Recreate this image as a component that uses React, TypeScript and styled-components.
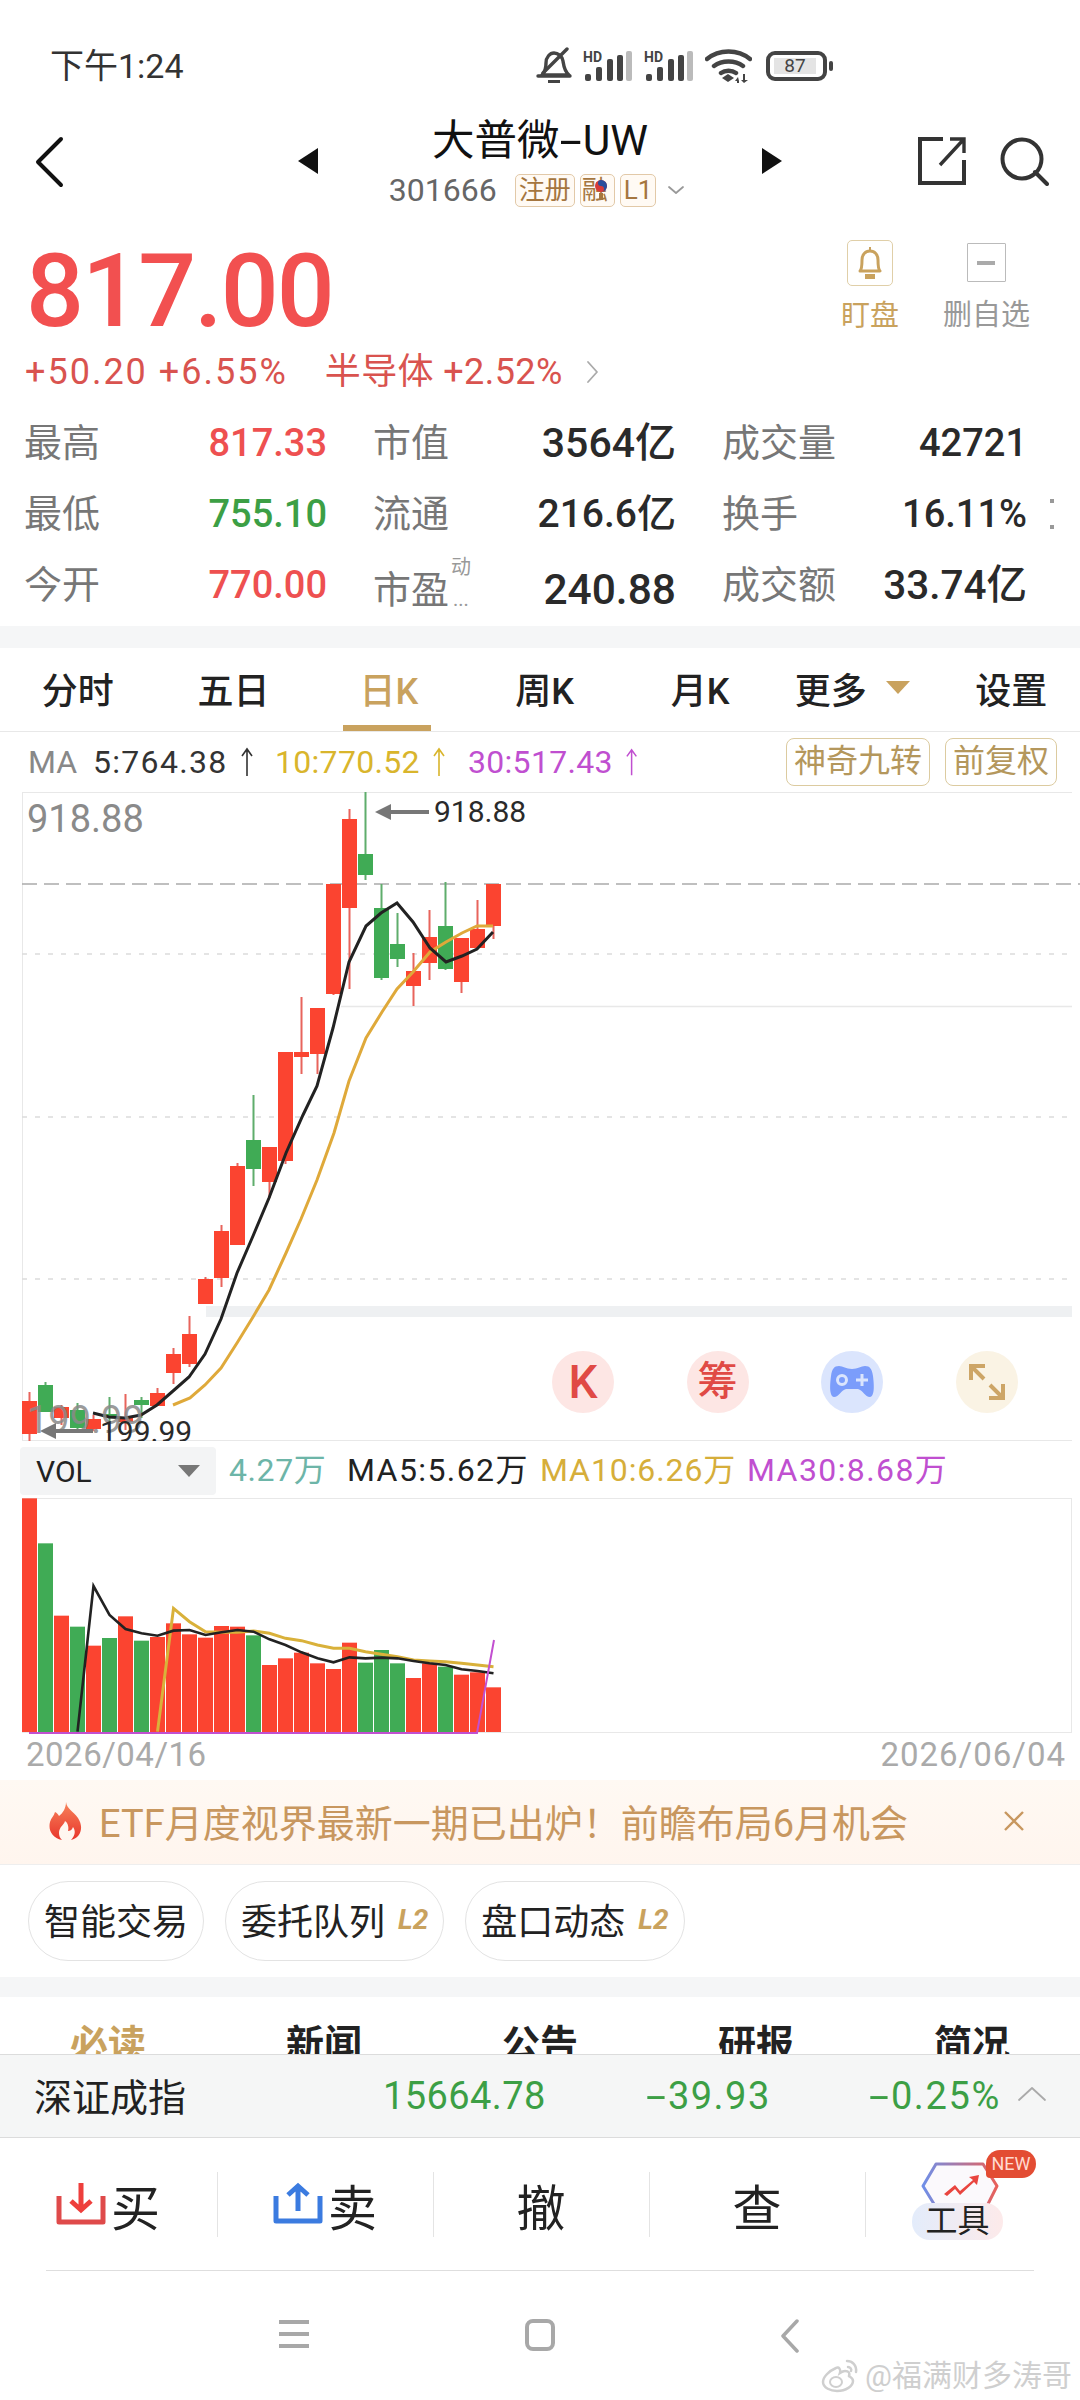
import React from "react";
import styled, { createGlobalStyle } from "styled-components";

const FONT = `Roboto, "Noto Sans CJK SC", "Noto Sans", sans-serif`;
const RED = "#ee5050";
const GREEN = "#3c9f45";
const GOLD = "#c9a25e";

const Global = createGlobalStyle`
  html, body { margin: 0; padding: 0; background: #fff; }
  body { font-family: ${FONT}; }
  * { box-sizing: border-box; }
`;

const Page = styled.div`
  position: relative;
  width: 1080px;
  height: 2400px;
  overflow: hidden;
  background: #fff;
  color: #222;
`;

/* a dash drawn wide, as the app's own font has it */
const Dash = styled.span`
  display: inline-block;
  width: 0.55em;
  text-align: center;
  transform: scaleX(1.9);
`;

/* status bar */
const StatusBar = styled.div`
  height: 110px;
  padding: 45px 253px 0 50px;
  display: flex;
  justify-content: space-between;
  align-items: flex-start;
`;
const Clock = styled.div`
  font-size: 34px;
  line-height: 42px;
  color: #333;
`;
const StatusIcons = styled.div`
  display: flex;
  align-items: center;
  gap: 11px;
  height: 42px;
`;
const Battery = styled.div`
  position: relative;
  margin-left: 3px;
  width: 61px;
  height: 30px;
  border: 4px solid #444;
  border-radius: 9px;
  padding: 3px 7px 3px 4px;
  &::after {
    content: "";
    position: absolute;
    right: -10px;
    top: 6px;
    width: 4px;
    height: 10px;
    border-radius: 2px;
    background: #444;
  }
`;
const BatteryLevel = styled.div`
  height: 16px;
  background: #e4e4e4;
  font-size: 19px;
  line-height: 16px;
  text-align: center;
  color: #444;
`;

/* header */
const Header = styled.div`
  height: 116px;
  display: grid;
  grid-template-columns: 298px 484px 298px;
`;
const HeaderSide = styled.div<{ $end?: boolean }>`
  display: flex;
  align-items: flex-start;
  justify-content: ${(p) => (p.$end ? "flex-end" : "flex-start")};
  gap: 32px;
  padding: 26px ${(p) => (p.$end ? "31px" : "0")} 0 ${(p) => (p.$end ? "0" : "34px")};
`;
const HeaderCenter = styled.div`
  display: flex;
  justify-content: space-between;
  align-items: flex-start;
`;
const Arrow = styled.div`
  margin-top: 38px;
  line-height: 0;
`;
const HeaderTitleCol = styled.div`
  display: flex;
  flex-direction: column;
  align-items: center;
  padding-top: 6px;
`;
const Title = styled.div`
  font-size: 42.5px;
  line-height: 50px;
  color: #111;
`;
const CodeRow = styled.div`
  display: flex;
  align-items: center;
  gap: 5px;
  margin-top: 7px;
  margin-right: 6px;
`;
const Code = styled.div`
  font-size: 32px;
  line-height: 34px;
  color: #666;
  margin-right: 13px;
`;
const Tag = styled.div`
  height: 33px;
  padding: 0 3px;
  border: 1px solid #e2c9a8;
  border-radius: 5px;
  background: #fffaf4;
  color: #a5763f;
  font-size: 26px;
  line-height: 31px;
  white-space: nowrap;
  display: flex;
  align-items: center;
`;
const RongTag = styled(Tag)`
  width: 35px;
  overflow: hidden;
  padding: 0 1px;
`;
const CodeMore = styled.div`
  margin-left: 6px;
  line-height: 0;
`;

/* quote */
const Quote = styled.div`
  height: 181px;
  display: flex;
  justify-content: space-between;
  padding: 0 50px 0 25px;
`;
const QuoteLeft = styled.div`
  display: flex;
  flex-direction: column;
`;
const Price = styled.div`
  font-size: 102px;
  font-weight: 500;
  line-height: 116px;
  margin-top: 7px;
  margin-left: 1px;
  letter-spacing: -1.9px;
  color: #f25050;
`;
const ChangeRow = styled.div`
  display: flex;
  align-items: center;
  gap: 37px;
  font-size: 36px;
  line-height: 42px;
  color: #d9534f;
  margin-top: 2px;
`;
const ChangeValue = styled.span`
  letter-spacing: 2px;
`;
const ChangeSector = styled.span`
  letter-spacing: 0.4px;
  margin-right: -14px;
`;
const QuoteActions = styled.div`
  display: flex;
  gap: 44px;
  padding-top: 14px;
`;
const Action = styled.div<{ $gold?: boolean }>`
  display: flex;
  flex-direction: column;
  align-items: center;
  font-size: 29px;
  line-height: 36px;
  color: ${(p) => (p.$gold ? GOLD : "#999")};
`;
const ActionBox = styled.div<{ $gold?: boolean }>`
  width: ${(p) => (p.$gold ? 46 : 39)}px;
  height: ${(p) => (p.$gold ? 46 : 39)}px;
  margin: ${(p) => (p.$gold ? "0 0 12px" : "3px 0 15px")};
  border: 1px solid ${(p) => (p.$gold ? "#e0cfa8" : "#bbb")};
  border-radius: ${(p) => (p.$gold ? 5 : 1)}px;
  display: flex;
  align-items: center;
  justify-content: center;
`;
const Minus = styled.div`
  width: 18px;
  height: 4px;
  background: #aaa;
`;

/* stats */
const Stats = styled.div`
  position: relative;
  height: 219px;
  padding-left: 24px;
  display: grid;
  grid-template-columns: 303px 303px 305px;
  grid-auto-rows: 71px;
  column-gap: 46px;
`;
const Stat = styled.div<{ $low?: boolean }>`
  display: flex;
  justify-content: space-between;
  align-items: center;
  padding-top: ${(p) => (p.$low ? 10 : 0)}px;
`;
const StatLabel = styled.div`
  position: relative;
  font-size: 38px;
  line-height: 46px;
  color: #777;
`;
const StatSup = styled.span`
  position: absolute;
  left: 78px;
  top: -12px;
  font-size: 20px;
  line-height: 24px;
  color: #999;
`;
const StatDots = styled.span`
  position: absolute;
  left: 80px;
  top: 20px;
  font-size: 20px;
  line-height: 24px;
  color: #999;
`;
const StatValue = styled.div<{ $c?: string; $fs: number }>`
  font-size: ${(p) => p.$fs}px;
  font-weight: 500;
  line-height: 46px;
  color: ${(p) => p.$c || "#2a2a2a"};
`;
const Kebab = styled.div`
  position: absolute;
  left: 1050px;
  top: 92px;
  width: 4px;
  height: 30px;
  border-top: 4px solid #999;
  border-bottom: 4px solid #999;
`;
const Band = styled.div<{ $h: number }>`
  height: ${(p) => p.$h}px;
  background: #f5f6f7;
`;

/* period tabs */
const PeriodTabs = styled.div`
  height: 84px;
  display: grid;
  grid-template-columns: repeat(7, 155.6px);
  border-bottom: 1px solid #e8e8e8;
`;
const PeriodTab = styled.div<{ $on?: boolean }>`
  position: relative;
  display: flex;
  align-items: center;
  justify-content: center;
  gap: 12px;
  padding-bottom: 4px;
  font-size: 36px;
  font-weight: 500;
  color: ${(p) => (p.$on ? GOLD : "#222")};
  &::after {
    content: "";
    display: ${(p) => (p.$on ? "block" : "none")};
    position: absolute;
    left: 32px;
    width: 88px;
    bottom: 0;
    height: 6px;
    background: ${GOLD};
  }
`;
const Caret = styled.div<{ $c: string; $w: number }>`
  width: 0;
  height: 0;
  border-left: ${(p) => p.$w}px solid transparent;
  border-right: ${(p) => p.$w}px solid transparent;
  border-top: ${(p) => p.$w * 1.15}px solid ${(p) => p.$c};
`;
const MoreCaret = styled(Caret)`
  margin: 0 7px;
`;

/* MA legend */
const MaRow = styled.div`
  height: 60px;
  display: flex;
  align-items: center;
  justify-content: space-between;
  padding: 0 23px 0 28px;
`;
const MaList = styled.div`
  display: flex;
  align-items: center;
  font-size: 32px;
`;
const MaItem = styled.span<{ $c: string; $w: number; $ls?: number }>`
  display: inline-flex;
  align-items: center;
  gap: 12px;
  width: ${(p) => p.$w}px;
  letter-spacing: ${(p) => p.$ls || 0}px;
  color: ${(p) => p.$c};
  white-space: nowrap;
`;
const MaButtons = styled.div`
  display: flex;
  gap: 15px;
`;
const MaButton = styled.div`
  height: 48px;
  padding: 0 7px;
  border: 1px solid #dccba0;
  border-radius: 8px;
  color: #b4975c;
  font-size: 32px;
  line-height: 44px;
  white-space: nowrap;
`;

/* chart */
const ChartWrap = styled.div`
  position: relative;
  height: 649px;
  line-height: 0;
`;
const FloatButtons = styled.div`
  position: absolute;
  left: 552px;
  top: 559px;
  display: flex;
  gap: 72.5px;
`;
const FloatButton = styled.div<{ $bg: string; $c: string; $fs?: number }>`
  width: 62px;
  height: 62px;
  border-radius: 50%;
  background: ${(p) => p.$bg};
  color: ${(p) => p.$c};
  display: flex;
  align-items: center;
  justify-content: center;
  font-size: ${(p) => p.$fs || 40}px;
  font-weight: 500;
  line-height: 1;
`;

/* VOL legend */
const VolRow = styled.div`
  height: 57px;
  display: flex;
  align-items: flex-start;
  padding: 5px 0 0 20px;
  font-size: 32px;
  white-space: nowrap;
`;
const VolSelect = styled.div`
  width: 196px;
  height: 48px;
  margin: 1px 13px 0 0;
  padding: 0 16px;
  border-radius: 4px;
  background: #f3f4f5;
  display: flex;
  align-items: center;
  justify-content: space-between;
  color: #222;
  font-size: 30px;
`;
const VolItem = styled.span<{ $c: string; $w: number; $ls: number }>`
  width: ${(p) => p.$w}px;
  line-height: 48px;
  letter-spacing: ${(p) => p.$ls}px;
  color: ${(p) => p.$c};
`;
const VolWrap = styled.div`
  height: 236px;
  line-height: 0;
`;
const Dates = styled.div`
  height: 46px;
  padding: 0 14px 5px 26px;
  display: flex;
  justify-content: space-between;
  align-items: center;
  font-size: 33px;
  letter-spacing: 0.5px;
  color: #aaa;
`;
const DateEnd = styled.span`
  letter-spacing: 1px;
`;

/* banner */
const Banner = styled.div`
  height: 85px;
  padding: 0 55px 3px 48px;
  display: flex;
  align-items: center;
  background: linear-gradient(#fff9f3, #fff5ee);
  border-bottom: 1px solid #eee;
`;
const BannerText = styled.div`
  flex: 1;
  margin-left: 16px;
  font-size: 38px;
  white-space: nowrap;
  color: #c8975f;
`;
const BannerClose = styled.div`
  line-height: 0;
`;

/* chips */
const Chips = styled.div`
  height: 112px;
  padding: 16px 0 0 28px;
  display: flex;
  gap: 21px;
`;
const Chip = styled.div`
  height: 80px;
  padding: 0 15px 4px;
  border: 1px solid #e3e3e3;
  border-radius: 40px;
  display: flex;
  align-items: center;
  gap: 13px;
  font-size: 36px;
  color: #222;
  white-space: nowrap;
`;
const L2 = styled.span`
  font-size: 28px;
  font-style: italic;
  font-weight: 700;
  color: ${GOLD};
`;

/* news tabs (cut off by the index bar) */
const NewsTabs = styled.div`
  height: 57px;
  overflow: hidden;
  display: grid;
  grid-template-columns: repeat(5, 1fr);
  padding-top: 22px;
`;
const NewsTab = styled.div<{ $on?: boolean }>`
  text-align: center;
  font-size: 38px;
  font-weight: 700;
  line-height: 50px;
  color: ${(p) => (p.$on ? GOLD : "#222")};
`;

/* index bar */
const IndexBar = styled.div`
  height: 84px;
  background: #f5f6f6;
  border-top: 1px solid #dcdcdc;
  border-bottom: 1px solid #dcdcdc;
  display: grid;
  grid-template-columns: 349px 162px 102px 123px 100px 132px 1fr;
  align-items: center;
  padding: 0 0 4px 34px;
  font-size: 38px;
`;
const IndexName = styled.div`
  color: #222;
`;
const IndexNum = styled.div<{ $col: number; $ls: number }>`
  grid-column: ${(p) => p.$col};
  padding-top: 3px;
  letter-spacing: ${(p) => p.$ls}px;
  color: ${GREEN};
  white-space: nowrap;
`;
const IndexUp = styled.div`
  grid-column: 7;
  padding-left: 15px;
  line-height: 0;
`;

/* trade bar */
const TradeBar = styled.div`
  height: 132px;
  display: grid;
  grid-template-columns: repeat(5, 216px);
  align-items: center;
`;
const TradeCell = styled.div<{ $first?: boolean }>`
  position: relative;
  height: 65px;
  display: flex;
  align-items: center;
  justify-content: center;
  gap: 5px;
  margin-left: ${(p) => (p.$first ? 0 : 1)}px;
  border-left: ${(p) => (p.$first ? "none" : "1px solid #e4e4e4")};
  font-size: 49px;
  color: #222;
`;
const ToolCell = styled(TradeCell)`
  flex-direction: column;
  gap: 0;
`;
const ToolIcon = styled.div`
  position: absolute;
  left: 55px;
  top: -10px;
  line-height: 0;
`;
const NewBadge = styled.div`
  position: absolute;
  left: 120px;
  top: -22px;
  width: 50px;
  height: 28px;
  border-radius: 14px 14px 14px 4px;
  background: #e34c33;
  color: #ffd9cf;
  font-size: 18px;
  line-height: 28px;
  text-align: center;
`;
const ToolLabel = styled.div`
  position: absolute;
  left: 46px;
  top: 31px;
  width: 91px;
  height: 37px;
  border-radius: 18px;
  background: linear-gradient(90deg, #e3ecfb, #fdeaea);
  font-size: 32px;
  line-height: 37px;
  text-align: center;
  color: #222;
`;
const HomeRule = styled.div`
  margin: 0 46px;
  border-top: 1px solid #dedede;
`;
const NavBar = styled.div`
  display: flex;
  align-items: flex-start;
  padding: 48px 0 0 279px;
  gap: 216px;
  line-height: 0;
`;
const NavBack = styled.div`
  margin-left: 9px;
`;
const Watermark = styled.div`
  position: absolute;
  right: 8px;
  bottom: 6px;
  display: flex;
  align-items: center;
  gap: 6px;
  font-size: 30px;
  line-height: 36px;
  color: #cfcfcf;
`;

/* -- chart data -- */
type C = [number, number, number, number, "r" | "g"];
const candles: C[] = [
  [1401, 1434, 1392, 1441, "r"],
  [1385, 1412, 1382, 1412, "g"],
  [1407, 1418, 1405, 1425, "r"],
  [1410, 1428, 1403, 1430, "g"],
  [1419, 1429, 1415, 1431, "r"],
  [1414, 1417, 1397, 1423, "g"],
  [1418, 1422, 1394, 1430, "r"],
  [1400, 1405, 1397, 1418, "g"],
  [1393, 1406, 1388, 1406, "r"],
  [1354, 1373, 1348, 1384, "r"],
  [1334, 1364, 1316, 1367, "r"],
  [1279, 1304, 1277, 1304, "r"],
  [1231, 1278, 1225, 1287, "r"],
  [1166, 1245, 1163, 1245, "r"],
  [1140, 1169, 1095, 1186, "g"],
  [1147, 1182, 1147, 1198, "r"],
  [1052, 1161, 1052, 1164, "r"],
  [1052, 1057, 997, 1074, "r"],
  [1008, 1054, 1008, 1074, "r"],
  [884, 994, 884, 995, "r"],
  [819, 908, 809, 989, "r"],
  [854, 875, 792, 880, "g"],
  [908, 978, 884, 980, "g"],
  [944, 959, 913, 967, "g"],
  [971, 986, 953, 1006, "r"],
  [937, 963, 910, 980, "r"],
  [926, 969, 882, 970, "g"],
  [938, 982, 938, 993, "r"],
  [929, 948, 900, 948, "r"],
  [884, 926, 884, 939, "r"],
];
const cx = (i: number) => 29.5 + 16 * i;
const ma5Main =
  "93,1413 109,1417 125,1418 141,1415 157,1405 173,1391 189,1377 205,1354 221,1319 237,1273 253,1236 269,1198 286,1153 303,1115 317,1086 333,1028 349,962 366,926 381,913 397,903 413,922 430,948 446,962 462,956 477,949 493,932";
const ma10Main =
  "173,1405 190,1398 205,1385 221,1368 237,1343 253,1317 269,1290 286,1253 301,1219 317,1180 334,1133 349,1081 366,1038 382,1012 397,989 413,972 430,952 446,942 462,933 477,926 493,926";

const volTops = [295, 430, 647, 680, 737, 714, 649, 722, 711, 670, 703, 713, 678, 680, 706, 795, 775, 758, 790, 807, 728, 788, 750, 790, 834, 790, 800, 824, 817, 862];
const volGreen = new Set([1, 3, 5, 7, 14, 21, 22, 23, 26]);
const volY = (py: number) => 1400 + py / 3;
const volBlack = [995, 558, 645, 687, 700, 707, 692, 690, 705, 697, 690, 695, 718, 735, 757, 775, 787, 772, 775, 773, 775, 783, 790, 795, 808, 813, 820];
const volGold = [995, 625, 665, 695, 697, 697, 693, 700, 715, 722, 735, 745, 745, 755, 763, 770, 780, 783, 785, 790, 795, 800];
const polyFrom = (arr: number[], start: number) =>
  arr.map((p, k) => `${cx(start + k)},${volY(p)}`).join(" ");

const Chevron = ({ w, h, d, c, sw }: { w: number; h: number; d: string; c: string; sw: number }) => (
  <svg width={w} height={h} viewBox={`0 0 ${w} ${h}`}>
    <path d={d} fill="none" stroke={c} strokeWidth={sw} strokeLinecap="round" strokeLinejoin="round" />
  </svg>
);

const BellOff = () => (
  <svg width="36" height="38" viewBox="0 0 36 38">
    <path d="M6 28c3-3 4-6 4-12 0-6 4-10 8-10s8 3 9 8c.8 5 1 10 6 14z" fill="none" stroke="#444" strokeWidth="3.4" strokeLinejoin="round" />
    <path d="M2 29h32" stroke="#444" strokeWidth="3.4" strokeLinecap="round" />
    <path d="M12 33h12v3H12z" fill="#444" />
    <path d="M7 26L31 2" stroke="#444" strokeWidth="3.4" strokeLinecap="round" />
  </svg>
);
const Signal = () => (
  <svg width="50" height="34" viewBox="0 0 50 34">
    <text x="0" y="13" fontFamily="Roboto, sans-serif" fontWeight="700" fontSize="14" fill="#444">HD</text>
    <rect x="2" y="25" width="6" height="7" rx="2" fill="#444" />
    <rect x="13" y="18" width="6" height="14" rx="2" fill="#444" />
    <rect x="24" y="10" width="6" height="22" rx="2" fill="#444" />
    <rect x="43" y="2" width="6" height="30" rx="2" fill="#bbb" />
    <rect x="34" y="6" width="6" height="26" rx="2" fill="#444" />
  </svg>
);
const Wifi = () => (
  <svg width="47" height="36" viewBox="0 0 47 36">
    <path d="M2 11C14 1 33 1 45 11M9 18c8-6 21-6 29 0M16 25c4-3 11-3 15 0" fill="none" stroke="#444" strokeWidth="4.4" strokeLinecap="round" />
    <path d="M17 30l6-4 6 4-6 4z" fill="#444" />
    <path d="M33 29l-3 4h2v2h2v-2h0zM38 26h2v6h3l-4 3-3-3h2z" fill="#444" />
  </svg>
);
const ShareIcon = () => (
  <svg width="50" height="50" viewBox="0 0 50 50">
    <path d="M26 3H3v44h44V24" fill="none" stroke="#333" strokeWidth="4" />
    <path d="M47 3L23 29M33 3h14v14" fill="none" stroke="#333" strokeWidth="3.4" />
  </svg>
);
const SearchIcon = () => (
  <svg width="50" height="50" viewBox="0 0 50 50">
    <circle cx="23" cy="23" r="19.5" fill="none" stroke="#333" strokeWidth="4" />
    <path d="M36 36l12 12" stroke="#333" strokeWidth="4" strokeLinecap="round" />
  </svg>
);
const RongLogo = () => (
  <svg width="14" height="22" viewBox="0 0 14 22" style={{ marginLeft: -14, flex: "none" }}>
    <circle cx="7" cy="7" r="6" fill="#d63b3b" />
    <path d="M7 1a6 6 0 0 1 0 12 3 3 0 0 0 0-6 3 3 0 0 1 0-6z" fill="#2a4f9e" />
    <rect x="5" y="14" width="4" height="7" fill="#a5763f" />
  </svg>
);
const BellGold = () => (
  <svg width="26" height="34" viewBox="0 0 26 34">
    <path d="M3 25c2-2 2-6 2-11s3-9 8-9 8 4 8 9 0 9 2 11z" fill="none" stroke={GOLD} strokeWidth="3" strokeLinejoin="round" />
    <path d="M13 1v4M9 29h8v3H9z" stroke={GOLD} strokeWidth="2" fill={GOLD} />
  </svg>
);
const Flame = () => (
  <svg width="35" height="38" viewBox="0 0 35 38">
    <defs>
      <linearGradient id="fl" x1="0" y1="0" x2="0" y2="1">
        <stop offset="0" stopColor="#f7835a" />
        <stop offset="1" stopColor="#e8362c" />
      </linearGradient>
    </defs>
    <path d="M18 0c1 7 7 9 12 16 6 9 3 20-7 22 4-4 5-9 2-13-1 3-3 4-5 4 1-4 0-8-3-10-1 4-6 6-6 12 0 3 1 5 3 7C4 36 0 28 2 20c1-4 4-6 5-10 2 1 3 2 4 4 4-3 7-8 7-14z" fill="url(#fl)" />
  </svg>
);
const Gamepad = () => (
  <svg width="46" height="34" viewBox="0 0 46 34">
    <path d="M10 1c4 0 7 3 13 3s9-3 13-3c5 0 7 3 8 10 1 8 2 20-3 21-5 0-7-7-12-8H17c-5 1-7 8-12 8C0 31 1 19 2 11 3 4 5 1 10 1z" fill="#7b9dfb" />
    <circle cx="13" cy="15" r="4.5" fill="none" stroke="#dbe5fd" strokeWidth="3" />
    <path d="M33 9v12M27 15h12" stroke="#dbe5fd" strokeWidth="3" />
  </svg>
);
const Expand = () => (
  <svg width="38" height="38" viewBox="0 0 38 38">
    <path d="M3 17V3h14M3 3l13 13M35 21v14H21M35 35L22 22" fill="none" stroke="#cda566" strokeWidth="4" />
  </svg>
);
const BuyIcon = ({ c, up }: { c: string; up?: boolean }) => (
  <svg width="50" height={up ? 44 : 42} viewBox={up ? "0 0 50 44" : "0 0 50 42"}>
    <path d={up ? "M3 14v25h44V14" : "M3 13v26h44V13"} fill="none" stroke={c} strokeWidth="5" strokeLinejoin="round" />
    {up ? (
      <path d="M25 29V5M15 13l10-9 10 9" fill="none" stroke={c} strokeWidth="5" />
    ) : (
      <path d="M25 0v25M15 18l10 9 10-9" fill="none" stroke="#ee3f3c" strokeWidth="5" />
    )}
  </svg>
);
const ToolHex = () => (
  <svg width="78" height="44" viewBox="0 0 78 44">
    <defs>
      <linearGradient id="hx" x1="0" y1="0" x2="1" y2="0">
        <stop offset="0" stopColor="#6f8fe8" />
        <stop offset="1" stopColor="#e8605a" />
      </linearGradient>
    </defs>
    <path d="M13 42L2 24 15 2h47l14 22-9 18" fill="#fbf9fc" stroke="url(#hx)" strokeWidth="3" strokeLinejoin="round" />
    <path d="M23 32l11-9 5 6 13-11-4-3 10-2-2 10-3-3-14 13-5-6-8 7z" fill="#e9453f" />
  </svg>
);
const WeiboMark = () => (
  <svg width="38" height="34" viewBox="0 0 38 34">
    <path d="M15 9C8 12 2 18 2 23c0 6 8 9 14 9 9 0 16-5 16-10 0-3-3-4-4-5 1-3 0-5-4-5-2 0-5 2-5 2 1-3-1-7-4-5z" fill="none" stroke="#cfcfcf" strokeWidth="2.5" />
    <ellipse cx="15" cy="23" rx="6" ry="5" fill="none" stroke="#cfcfcf" strokeWidth="2" />
    <path d="M26 2c5 0 10 4 9 11M27 8c2 0 4 2 3 4" fill="none" stroke="#cfcfcf" strokeWidth="2.5" strokeLinecap="round" />
  </svg>
);

const UpArrow = ({ c }: { c: string }) => (
  <svg width="14" height="30" viewBox="0 0 14 30">
    <path d="M7 29V2M2 9l5-7 5 7" fill="none" stroke={c} strokeWidth="1.6" />
  </svg>
);

const stats: [string, string, string, number][] = [
  ["最高", "817.33", RED, 38],
  ["市值", "3564亿", "", 41],
  ["成交量", "42721", "", 38],
  ["最低", "755.10", GREEN, 38],
  ["流通", "216.6亿", "", 39],
  ["换手", "16.11%", "", 38],
  ["今开", "770.00", RED, 38],
  ["市盈", "240.88", "", 42.5],
  ["成交额", "33.74亿", "", 40.5],
];

export default function App() {
  return (
    <Page>
      <Global />
      <StatusBar>
        <Clock>下午1:24</Clock>
        <StatusIcons>
          <BellOff />
          <Signal />
          <Signal />
          <Wifi />
          <Battery>
            <BatteryLevel>87</BatteryLevel>
          </Battery>
        </StatusIcons>
      </StatusBar>

      <Header>
        <HeaderSide>
          <Chevron w={30} h={52} d="M27 3L4 26l23 23" c="#111" sw={4} />
        </HeaderSide>
        <HeaderCenter>
          <Arrow>
            <svg width="20" height="26" viewBox="0 0 20 26"><path d="M20 0v26L0 13z" fill="#111" /></svg>
          </Arrow>
          <HeaderTitleCol>
            <Title>大普微<Dash>-</Dash>UW</Title>
            <CodeRow>
              <Code>301666</Code>
              <Tag>注册</Tag>
              <RongTag>融<RongLogo /></RongTag>
              <Tag>L1</Tag>
              <CodeMore>
                <Chevron w={18} h={10} d="M2 2l7 6 7-6" c="#999" sw={1.8} />
              </CodeMore>
            </CodeRow>
          </HeaderTitleCol>
          <Arrow>
            <svg width="20" height="26" viewBox="0 0 20 26"><path d="M0 0v26l20-13z" fill="#111" /></svg>
          </Arrow>
        </HeaderCenter>
        <HeaderSide $end>
          <ShareIcon />
          <SearchIcon />
        </HeaderSide>
      </Header>

      <Quote>
        <QuoteLeft>
          <Price>817.00</Price>
          <ChangeRow>
            <ChangeValue>+50.20 +6.55%</ChangeValue>
            <ChangeSector>半导体 +2.52%</ChangeSector>
            <Chevron w={14} h={24} d="M2 2l9 10-9 10" c="#aaa" sw={1.8} />
          </ChangeRow>
        </QuoteLeft>
        <QuoteActions>
          <Action $gold>
            <ActionBox $gold><BellGold /></ActionBox>
            盯盘
          </Action>
          <Action>
            <ActionBox><Minus /></ActionBox>
            删自选
          </Action>
        </QuoteActions>
      </Quote>

      <Stats>
        {stats.map(([l, v, c, fs], i) => (
          <Stat key={l} $low={i === 7}>
            <StatLabel>
              {l}
              {i === 7 && <StatSup>动</StatSup>}
              {i === 7 && <StatDots>...</StatDots>}
            </StatLabel>
            <StatValue $c={c} $fs={fs}>{v}</StatValue>
          </Stat>
        ))}
        <Kebab />
      </Stats>
      <Band $h={22} />

      <PeriodTabs>
        <PeriodTab>分时</PeriodTab>
        <PeriodTab>五日</PeriodTab>
        <PeriodTab $on>日K</PeriodTab>
        <PeriodTab>周K</PeriodTab>
        <PeriodTab>月K</PeriodTab>
        <PeriodTab>更多<MoreCaret $c={GOLD} $w={12} /></PeriodTab>
        <PeriodTab>设置</PeriodTab>
      </PeriodTabs>

      <MaRow>
        <MaList>
          <MaItem $c="#888" $w={65}>MA</MaItem>
          <MaItem $c="#333" $w={182} $ls={1.3}>5:764.38<UpArrow c="#333" /></MaItem>
          <MaItem $c="#d9b52c" $w={193} $ls={0.3}>10:770.52<UpArrow c="#d9b52c" /></MaItem>
          <MaItem $c="#c04fd0" $w={170} $ls={0.3}>30:517.43<UpArrow c="#c04fd0" /></MaItem>
        </MaList>
        <MaButtons>
          <MaButton>神奇九转</MaButton>
          <MaButton>前复权</MaButton>
        </MaButtons>
      </MaRow>

      <ChartWrap>
        <svg width="1080" height="649" viewBox="0 792 1080 649">
          <path d="M22.5 792V1441M22 792.5H1072M22 1440.5H1072" stroke="#e8e8e8" strokeWidth="1" fill="none" />
          <path d="M22 954H1072M22 1117H1072M22 1279H1072" stroke="#dcdcdc" strokeWidth="1.6" strokeDasharray="5 8" />
          <path d="M341 1006.5H1072" stroke="#e8e8e8" strokeWidth="1.5" />
          <rect x="206" y="1306" width="866" height="11" fill="#eef0f2" />
          <path d="M22 884H1080" stroke="#aaa" strokeWidth="1.5" strokeDasharray="15 7" />
          {candles.map(([t, b, wt, wb, col], i) => {
            const x = cx(i);
            const fill = col === "r" ? "#fb4430" : "#40ab55";
            const wick = col === "r" ? "#e8645c" : "#5fad6c";
            return (
              <g key={i}>
                <rect x={x - 1} y={wt} width="2" height={wb - wt} fill={wick} />
                <rect x={x - 7.5} y={t} width="15" height={b - t} fill={fill} />
              </g>
            );
          })}
          <polyline points={ma10Main} fill="none" stroke="#dfa93a" strokeWidth="3" />
          <polyline points={ma5Main} fill="none" stroke="#222" strokeWidth="3" />
          <text x="27" y="832" fontFamily="Roboto, sans-serif" fontSize="38" fill="#8a8a8a">918.88</text>
          <path d="M375 812l16-8v6h38v4h-38v6z" fill="#777" />
          <text x="434" y="822" fontFamily="Roboto, sans-serif" fontSize="30" fill="#2a2a2a">918.88</text>
          <text x="27" y="1433" fontFamily="Roboto, sans-serif" fontSize="38" fill="#8a8a8a" opacity="0.85">199.99</text>
          <path d="M40 1431l16-8v6h37v4H56v6z" fill="#777" />
          <text x="100" y="1442" fontFamily="Roboto, sans-serif" fontSize="30" fill="#2a2a2a">199.99</text>
        </svg>
        <FloatButtons>
          <FloatButton $bg="#fde6e4" $c="#e04a45" $fs={46}>K</FloatButton>
          <FloatButton $bg="#fde6e4" $c="#e04a45">筹</FloatButton>
          <FloatButton $bg="#dbe5fd" $c="#7b9dfb"><Gamepad /></FloatButton>
          <FloatButton $bg="#faf3e4" $c="#cda566"><Expand /></FloatButton>
        </FloatButtons>
      </ChartWrap>

      <VolRow>
        <VolSelect>VOL<Caret $c="#777" $w={11} /></VolSelect>
        <VolItem $c="#6db5a8" $w={118} $ls={0.6}>4.27万</VolItem>
        <VolItem $c="#222" $w={193} $ls={1.4}>MA5:5.62万</VolItem>
        <VolItem $c="#d6ae3a" $w={207} $ls={0.9}>MA10:6.26万</VolItem>
        <VolItem $c="#c04fd0" $w={200} $ls={1.4}>MA30:8.68万</VolItem>
      </VolRow>
      <VolWrap>
        <svg width="1080" height="236" viewBox="0 1498 1080 236">
          <path d="M22.5 1498V1732M1071.5 1498V1732M22 1498.5H1072M22 1732.5H1072" stroke="#e8e8e8" strokeWidth="1" fill="none" />
          {volTops.map((p, i) => (
            <rect key={i} x={cx(i) - 7.5} y={volY(p)} width="15" height={1732 - volY(p)} fill={volGreen.has(i) ? "#40ab55" : "#fb4430"} />
          ))}
          <polyline points={polyFrom(volGold, 8)} fill="none" stroke="#d9b13a" strokeWidth="3" />
          <polyline points={polyFrom(volBlack, 3)} fill="none" stroke="#222" strokeWidth="2.6" />
          <polyline points={`29,1733 477,1733 494,1640`} fill="none" stroke="#c24fd0" strokeWidth="2" />
        </svg>
      </VolWrap>
      <Dates>
        <span>2026/04/16</span>
        <DateEnd>2026/06/04</DateEnd>
      </Dates>

      <Banner>
        <Flame />
        <BannerText>ETF月度视界最新一期已出炉！前瞻布局6月机会</BannerText>
        <BannerClose>
          <svg width="22" height="22" viewBox="0 0 22 22"><path d="M2 2l18 18M20 2L2 20" stroke="#c8975f" strokeWidth="2.4" /></svg>
        </BannerClose>
      </Banner>

      <Chips>
        <Chip>智能交易</Chip>
        <Chip>委托队列<L2>L2</L2></Chip>
        <Chip>盘口动态<L2>L2</L2></Chip>
      </Chips>
      <Band $h={20} />

      <NewsTabs>
        <NewsTab $on>必读</NewsTab>
        <NewsTab>新闻</NewsTab>
        <NewsTab>公告</NewsTab>
        <NewsTab>研报</NewsTab>
        <NewsTab>简况</NewsTab>
      </NewsTabs>

      <IndexBar>
        <IndexName>深证成指</IndexName>
        <IndexNum $col={2} $ls={0.4}>15664.78</IndexNum>
        <IndexNum $col={4} $ls={1.5}><Dash>-</Dash>39.93</IndexNum>
        <IndexNum $col={6} $ls={1.6}><Dash>-</Dash>0.25%</IndexNum>
        <IndexUp>
          <Chevron w={30} h={16} d="M2 14L15 2l13 12" c="#aaa" sw={1.8} />
        </IndexUp>
      </IndexBar>

      <TradeBar>
        <TradeCell $first><BuyIcon c="#df4a4a" />买</TradeCell>
        <TradeCell><BuyIcon c="#3b7be0" up />卖</TradeCell>
        <TradeCell>撤</TradeCell>
        <TradeCell>查</TradeCell>
        <ToolCell>
          <ToolIcon><ToolHex /></ToolIcon>
          <NewBadge>NEW</NewBadge>
          <ToolLabel>工具</ToolLabel>
        </ToolCell>
      </TradeBar>
      <HomeRule />
      <NavBar>
        <svg width="30" height="30" viewBox="0 0 30 30"><path d="M0 3h30M0 15h30M0 27h30" stroke="#a8a8a8" strokeWidth="4" /></svg>
        <svg width="30" height="32" viewBox="0 0 30 32"><rect x="2" y="2" width="26" height="28" rx="6" fill="none" stroke="#a8a8a8" strokeWidth="4" /></svg>
        <NavBack>
          <Chevron w={20} h={34} d="M17 2L3 17l14 15" c="#a8a8a8" sw={3.5} />
        </NavBack>
      </NavBar>

      <Watermark>
        <WeiboMark />
        @福满财多涛哥
      </Watermark>
    </Page>
  );
}
